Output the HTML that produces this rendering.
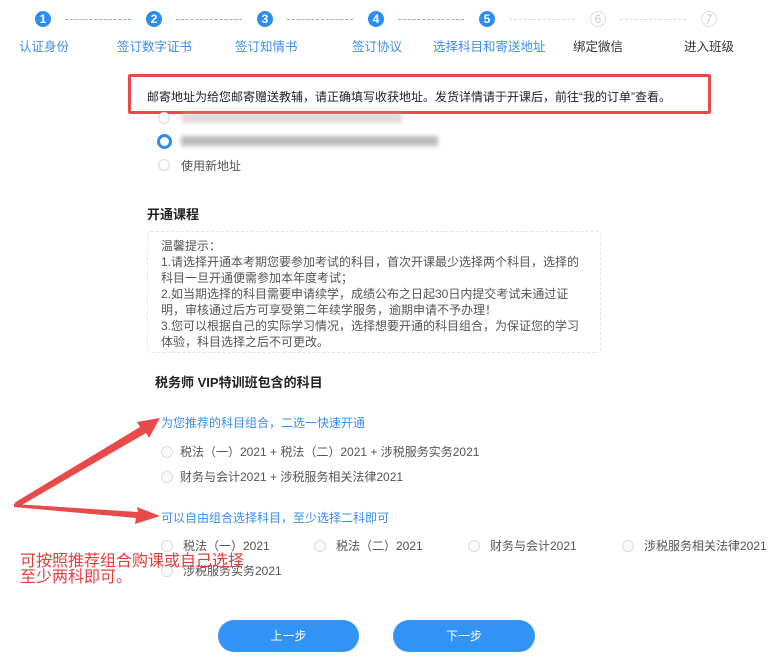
<!DOCTYPE html><html><head><meta charset="utf-8"><style>
body{margin:0;width:779px;height:668px;background:#fff;font-family:"Liberation Sans","Noto Sans CJK SC",sans-serif;position:relative;overflow:hidden;color:#333}
.a{position:absolute;white-space:nowrap}
.c{position:absolute;width:16px;height:16px;border-radius:50%;background:#2c8cf4;color:#fff;font-size:12px;font-weight:bold;text-align:center;line-height:16px;top:11px}
.c.g{background:#fff;border:1px solid #ddd;color:#ccc;width:14px;height:14px;line-height:14px;font-weight:normal}
.d{position:absolute;top:19px;height:0;border-top:1px dashed #7fb4f0;width:66px}
.d.g{border-color:#ddd}
.l{position:absolute;top:36px;font-size:12.5px;color:#3b8ef0}
.r{position:absolute;width:10px;height:10px;border:1px solid #ddd;border-radius:50%;background:#fafafa}
.t{font-size:12px;color:#555}
.bl{filter:blur(2px);background:#bbb;height:10px;position:absolute}
</style></head><body>
<div class="c" style="left:35px">1</div><div class="c" style="left:146px">2</div><div class="c" style="left:257px">3</div><div class="c" style="left:368px">4</div><div class="c" style="left:479px">5</div><div class="c g" style="left:590px">6</div><div class="c g" style="left:701px">7</div>
<div class="d" style="left:65px"></div><div class="d" style="left:176px"></div><div class="d" style="left:287px"></div><div class="d" style="left:398px"></div><div class="d g" style="left:509px"></div><div class="d g" style="left:620px"></div>
<div class="l" style="left:19px">认证身份</div><div class="l" style="left:117px">签订数字证书</div><div class="l" style="left:235px">签订知情书</div><div class="l" style="left:352px">签订协议</div><div class="l" style="left:433px">选择科目和寄送地址</div><div class="l" style="left:573px;color:#333">绑定微信</div><div class="l" style="left:684px;color:#333">进入班级</div>
<div class="a" style="left:128px;top:74px;width:577px;height:34px;border:3px solid #e84a4a;border-radius:2px"></div>
<div class="a" style="left:147px;top:88px;font-size:12px;color:#222">邮寄地址为给您邮寄赠送教辅，请正确填写收获地址。发货详情请于开课后，前往“我的订单”查看。</div>
<div class="r" style="left:158px;top:112px"></div><div class="bl" style="left:182px;top:113px;width:220px;opacity:.5"></div>
<div class="a" style="left:157px;top:134px;width:9px;height:9px;border:3px solid #2c8cf4;border-radius:50%"></div><div class="bl" style="left:181px;top:136px;width:257px"></div>
<div class="r" style="left:158px;top:159px"></div><div class="a t" style="left:181px;top:157px">使用新地址</div>
<div class="a" style="left:147px;top:204px;font-size:13px;font-weight:bold;color:#222">开通课程</div>
<div class="a" style="left:147px;top:231px;width:452px;height:120px;border:1px dashed #e6e6e6;border-radius:4px"></div>
<div class="a t" style="left:161px;top:238px;line-height:16px;color:#555">温馨提示：<br>1.请选择开通本考期您要参加考试的科目，首次开课最少选择两个科目，选择的<br>科目一旦开通便需参加本年度考试；<br>2.如当期选择的科目需要申请续学，成绩公布之日起30日内提交考试未通过证<br>明，审核通过后方可享受第二年续学服务，逾期申请不予办理！<br>3.您可以根据自己的实际学习情况，选择想要开通的科目组合，为保证您的学习<br>体验，科目选择之后不可更改。</div>
<div class="a" style="left:155px;top:372px;font-size:13px;font-weight:bold;color:#222">税务师 VIP特训班包含的科目</div>
<div class="a" style="left:161px;top:414px;font-size:12px;color:#3b8ef0">为您推荐的科目组合，二选一快速开通</div>
<div class="r" style="left:161px;top:446px"></div><div class="a t" style="left:180px;top:443px">税法（一）2021 + 税法（二）2021 + 涉税服务实务2021</div>
<div class="r" style="left:161px;top:471px"></div><div class="a t" style="left:180px;top:468px">财务与会计2021 + 涉税服务相关法律2021</div>
<div class="a" style="left:161px;top:509px;font-size:12px;color:#3b8ef0">可以自由组合选择科目，至少选择二科即可</div>
<div class="r" style="left:161px;top:540px"></div><div class="a t" style="left:183px;top:537px">税法（一）2021</div>
<div class="r" style="left:314px;top:540px"></div><div class="a t" style="left:336px;top:537px">税法（二）2021</div>
<div class="r" style="left:468px;top:540px"></div><div class="a t" style="left:490px;top:537px">财务与会计2021</div>
<div class="r" style="left:622px;top:540px"></div><div class="a t" style="left:644px;top:537px">涉税服务相关法律2021</div>
<div class="r" style="left:161px;top:565px"></div><div class="a t" style="left:183px;top:562px">涉税服务实务2021</div>
<div class="a" style="left:20px;top:554px;font-size:16px;line-height:16px;color:#e83c3c">可按照推荐组合购课或自己选择<br>至少两科即可。</div>
<svg class="a" style="left:0;top:0" width="779" height="668"><polygon points="14,503 140,427 137,422 160,418 149,438 146,433 20,506" fill="#e84a4a"/><polygon points="14,504 138,512 137,507 160,516 135,524 136,518 14,507" fill="#e84a4a"/></svg>
<div class="a" style="left:218px;top:620px;width:141px;height:32px;border-radius:16px;background:#3194f5;color:#fff;font-size:12px;text-align:center;line-height:32px">上一步</div>
<div class="a" style="left:393px;top:620px;width:142px;height:32px;border-radius:16px;background:#3194f5;color:#fff;font-size:12px;text-align:center;line-height:32px">下一步</div>
</body></html>
